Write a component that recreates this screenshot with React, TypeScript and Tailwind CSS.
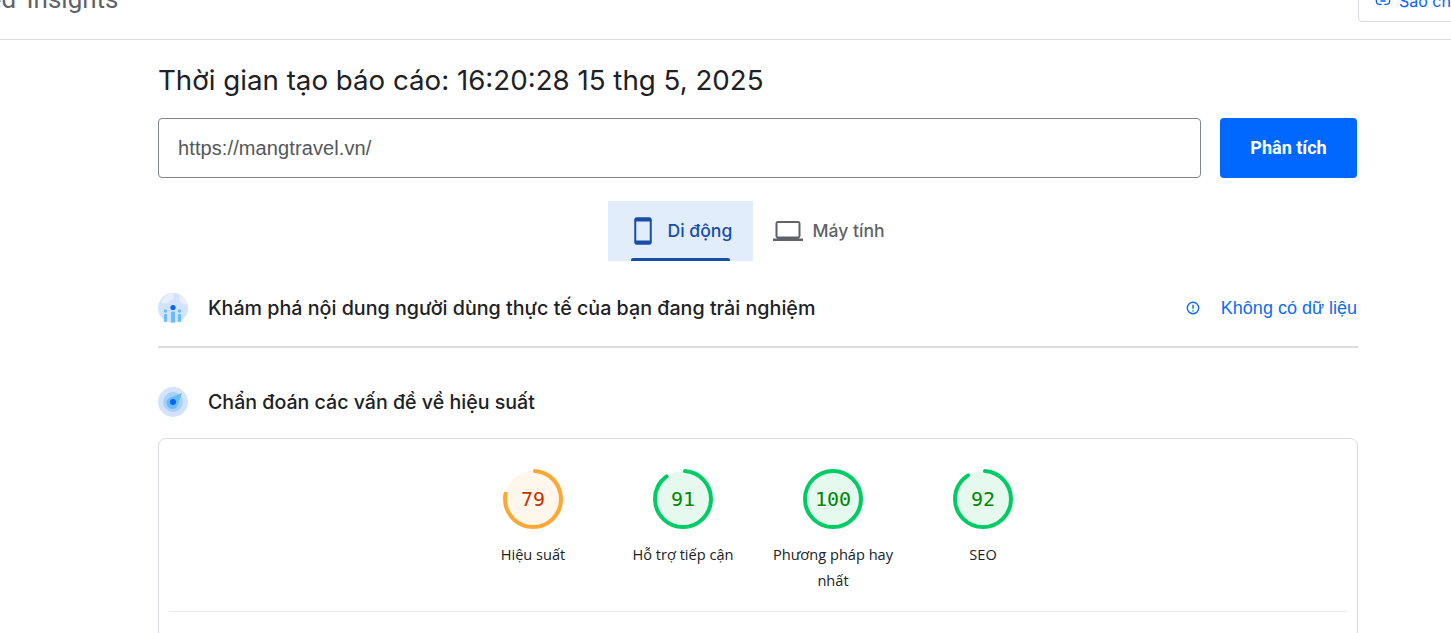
const scores = [
  { label: "Hiệu suất", value: 79, ring: "#ffa733", fill: "#fff6ec", text: "#c33300" },
  { label: "Hỗ trợ tiếp cận", value: 91, ring: "#00cc66", fill: "#e5f9ef", text: "#008800" },
  { label: "Phương pháp hay nhất", value: 100, ring: "#00cc66", fill: "#e5f9ef", text: "#008800" },
  { label: "SEO", value: 92, ring: "#00cc66", fill: "#e5f9ef", text: "#008800" },
];

function Gauge({ value, ring, fill, text }: { value: number; ring: string; fill: string; text: string }) {
  const circumference = 2 * Math.PI * 28;
  const filled = (value / 100) * circumference;
  return (
    <div className="relative h-[60px] w-[60px]">
      <svg viewBox="0 0 60 60" className="h-[60px] w-[60px] -rotate-90">
        <circle cx="30" cy="30" r="28" fill={fill} />
        <circle
          cx="30"
          cy="30"
          r="28"
          fill="none"
          stroke={ring}
          strokeWidth="4"
          strokeLinecap="round"
          strokeDasharray={value === 100 ? undefined : `${filled - 4} ${circumference}`}
          strokeDashoffset={value === 100 ? undefined : -2}
        />
      </svg>
      <div
        className="absolute inset-0 flex items-center justify-center font-['DejaVu_Sans_Mono',monospace] text-[20px]"
        style={{ color: text }}
      >
        {value}
      </div>
    </div>
  );
}

function PhoneIcon() {
  return (
    <svg viewBox="0 0 24 24" className="h-[30px] w-[30px]" fill="currentColor" fillRule="evenodd">
      <path d="M7 1h10c1.1 0 2 .9 2 2v18c0 1.1-.9 2-2 2H7c-1.1 0-2-.9-2-2V3c0-1.1.9-2 2-2zm-.4 3.4v15.2h10.800V4.400H6.600z" />
    </svg>
  );
}

function LaptopIcon() {
  return (
    <svg viewBox="0 0 24 24" className="h-[30px] w-[30px]" fill="currentColor" fillRule="evenodd">
      <path d="M20 18c1.1 0 2-.9 2-2V6c0-1.1-.9-2-2-2H4c-1.100 0-2 .9-2 2v10c0 1.100.9 2 2 2H0v2h24v-2h-4zM3.600 5.600h16.800v10.800H3.600V5.600z" />
    </svg>
  );
}

function FieldIcon() {
  return (
    <svg viewBox="0 0 30 30" className="h-[30px] w-[30px] shrink-0">
      <circle cx="15" cy="15" r="15" fill="#d2e3fc" />
      <path d="M3 9c2-4 6-8 11-9 2 2 3 4 1 6-3 0-3 3-6 4-2 1-4 0-6-1z" fill="#e8f0fe" />
      <path d="M22 2c4 2 6 6 7 9-3 1-6 0-7-3-1-2-1-4 0-6z" fill="#e8f0fe" />
      <circle cx="15" cy="14.500" r="2.600" fill="#0b63f6" />
      <circle cx="7.500" cy="18" r="1.700" fill="#66bdf8" />
      <circle cx="21.500" cy="18" r="1.700" fill="#66bdf8" />
      <rect x="6" y="21" width="3" height="8" rx="1" fill="#66bdf8" />
      <rect x="20" y="21" width="3" height="8" rx="1" fill="#66bdf8" />
      <rect x="13" y="18.500" width="4" height="11" rx="1" fill="#66bdf8" />
    </svg>
  );
}

function LabIcon() {
  return (
    <svg viewBox="0 0 30 30" className="h-[30px] w-[30px] shrink-0">
      <circle cx="15" cy="15" r="15" fill="#d2e3fc" />
      <circle cx="15" cy="15" r="10" fill="#a8d0fb" />
      <path d="M24 6 19 20a6 6 0 1 1-5-10z" fill="#66bdf8" />
      <circle cx="15" cy="15" r="3" fill="#0b63f6" />
    </svg>
  );
}

export default function App() {
  return (
    <div className="h-[633px] w-[1451px] overflow-hidden bg-white font-['Inter',sans-serif]">
      <header className="flex h-10 items-end justify-between overflow-hidden border-b border-[#dadce0]">
        <span className="mb-[26px] ml-[-115px] font-['Roboto',sans-serif] text-[26px] leading-[28px] [word-spacing:4px] text-[#5f6368]">
          PageSpeed Insights
        </span>
        <button className="mr-[-27px] mb-[17px] flex h-[42px] w-[120px] items-center gap-2 rounded-[4px] border border-[#dadce0] pl-4 text-[16px] whitespace-nowrap text-[#0b63f6]">
          <svg viewBox="0 0 24 24" className="h-4 w-4 shrink-0" fill="none" stroke="currentColor" strokeWidth="2">
            <path d="M10 7H7a5 5 0 0 0 0 10h3M14 7h3a5 5 0 0 1 0 10h-3M8 12h8" />
          </svg>
          Sao chép
        </button>
      </header>

      <main className="ml-[158px] w-[1200px]">
        <h1 className="mt-[22px] h-9 text-[27.700px] leading-9 text-[#202124]">
          Thời gian tạo báo cáo: 16:20:28 15 thg 5, 2025
        </h1>

        <div className="mt-[20px] flex gap-[19px]">
          <div className="flex h-[60px] w-[1043px] items-center rounded-[4px] border border-[#80868b] pl-[19px] font-['Liberation_Sans',sans-serif] text-[20px] tracking-[0.1px] text-[#53575b]">
            https://mangtravel.vn/
          </div>
          <button className="h-[60px] w-[137px] rounded-[4px] bg-[#0067ff] pb-[2px] font-['Roboto',sans-serif] text-[18px] font-bold text-white">
            Phân tích
          </button>
        </div>

        <div className="mt-[23px] flex justify-center pr-[11px]">
          <div className="relative flex h-[60px] w-[145px] items-center gap-[10px] bg-[#e2edfb] pl-[20px] text-[17.600px] font-medium text-[#174ea6]">
            <PhoneIcon />
            <span>Di động</span>
            <div className="absolute bottom-0 left-[23px] h-[3px] w-[99px] rounded-t-[2px] bg-[#174ea6]" />
          </div>
          <div className="flex h-[60px] w-[145px] items-center gap-[10px] pl-[20px] text-[17.600px] font-medium text-[#5f6368]">
            <LaptopIcon />
            <span>Máy tính</span>
          </div>
        </div>

        <div className="mt-[17px] flex h-[70px] items-center border-b-2 border-[#dadce0] pb-[8px]">
          <FieldIcon />
          <span className="mt-[2px] ml-[20px] text-[19.700px] font-medium text-[#202124]">
            Khám phá nội dung người dùng thực tế của bạn đang trải nghiệm
          </span>
          <span className="ml-auto flex items-center gap-[21px] pr-[1px] text-[#0b6cf0]">
            <svg viewBox="0 0 14 14" className="h-[14px] w-[14px]" fill="none" stroke="currentColor">
              <circle cx="7" cy="7" r="5.700" strokeWidth="1.400" />
              <path d="M7 3.800v4M7 9.200v1.200" strokeWidth="1.400" />
            </svg>
            <span className="font-['Liberation_Sans',sans-serif] text-[18px]">Không có dữ liệu</span>
          </span>
        </div>

        <div className="mt-[31px] flex h-[46px] items-center">
          <LabIcon />
          <span className="mt-[2px] ml-[20px] text-[19.600px] font-medium text-[#202124]">
            Chẩn đoán các vấn đề về hiệu suất
          </span>
        </div>

        <section className="mt-[13px] h-[300px] rounded-[8px] border border-[#dadce0] px-[10px] pt-[30px]">
          <div className="flex h-[143px] justify-center border-b border-[#e8eaed]">
            {scores.map((score) => (
              <div key={score.label} className="flex w-[150px] flex-col items-center px-[12px]">
                <Gauge value={score.value} ring={score.ring} fill={score.fill} text={score.text} />
                <p className="mt-[12px] text-center font-['Open_Sans',sans-serif] text-[14.600px] leading-[26px] text-[#202124]">
                  {score.label}
                </p>
              </div>
            ))}
          </div>
        </section>
      </main>
    </div>
  );
}
